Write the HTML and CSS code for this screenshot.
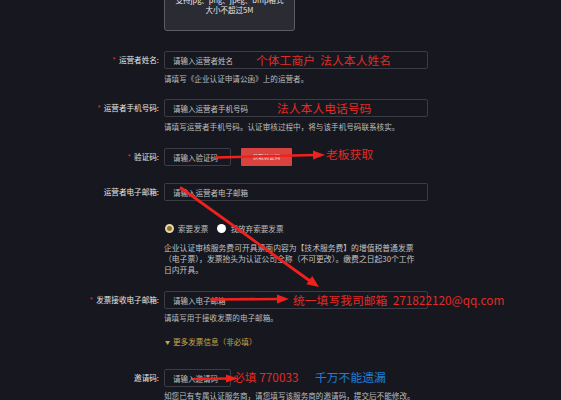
FILE: index.html
```html
<!DOCTYPE html>
<html lang="zh-CN">
<head>
<meta charset="utf-8">
<title>企业认证</title>
<link rel="stylesheet" href="styles.css">
</head>
<body>
<div class="page">
  <div class="form">
    <div class="row row-upload">
      <div class="label"></div>
      <div class="field">
        <div class="upload">
          <div>支持jpg、png、jpeg、bmp格式</div>
          <div>大小不超过5M</div>
        </div>
      </div>
    </div>

    <div class="row row-name">
      <div class="label"><span class="req">*</span>运营者姓名:</div>
      <div class="field">
        <div class="line">
          <input class="input" placeholder="请输入运营者姓名">
          <span class="note note-name">个体工商户&nbsp;&nbsp;法人本人姓名</span>
        </div>
        <div class="help">请填写《企业认证申请公函》上的运营者。</div>
      </div>
    </div>

    <div class="row row-phone">
      <div class="label"><span class="req">*</span>运营者手机号码:</div>
      <div class="field">
        <div class="line">
          <input class="input" placeholder="请输入运营者手机号码">
          <span class="note note-phone">法人本人电话号码</span>
        </div>
        <div class="help">请填写运营者手机号码。认证审核过程中，将与该手机号码联系核实。</div>
      </div>
    </div>

    <div class="row row-code">
      <div class="label"><span class="req">*</span>验证码:</div>
      <div class="field">
        <div class="line">
          <input class="input input-short" placeholder="请输入验证码">
          <button class="btn-code">获取验证码</button>
          <span class="note note-boss">老板获取</span>
        </div>
      </div>
    </div>

    <div class="row row-email">
      <div class="label">运营者电子邮箱:</div>
      <div class="field">
        <div class="line">
          <input class="input" placeholder="请输入运营者电子邮箱">
        </div>
      </div>
    </div>

    <div class="row row-radio">
      <div class="label"></div>
      <div class="field radios">
        <span class="radio radio-on"></span><span class="radio-text">索要发票</span>
        <span class="radio radio-off"></span><span class="radio-text">我放弃索要发票</span>
      </div>
    </div>

    <div class="row row-para">
      <div class="label"></div>
      <div class="field para">企业认证审核服务费可开具票面内容为【技术服务费】的增值税普通发票<br>（电子票），发票抬头为认证公司全称（不可更改）。缴费之日起30个工作<br>日内开具。</div>
    </div>

    <div class="row row-invoice">
      <div class="label"><span class="req">*</span>发票接收电子邮箱:</div>
      <div class="field">
        <div class="line">
          <input class="input" placeholder="请输入电子邮箱">
          <span class="note note-invoice">统一填写我司邮箱&nbsp;&nbsp;271822120@qq.com</span>
        </div>
        <div class="help">请填写用于接收发票的电子邮箱。</div>
      </div>
    </div>

    <div class="row row-more">
      <div class="label"></div>
      <div class="field more"><span class="tri">▼</span>更多发票信息（非必填）</div>
    </div>

    <div class="row row-invite">
      <div class="label">邀请码:</div>
      <div class="field">
        <div class="line">
          <input class="input input-short" placeholder="请输入邀请码">
          <span class="note note-must">必填 770033</span>
          <span class="note note-blue">千万不能遗漏</span>
        </div>
        <div class="help">如您已有专属认证服务商，请您填写该服务商的邀请码，提交后不能修改。</div>
      </div>
    </div>
  </div>

  <svg class="arrows" width="561" height="400" viewBox="0 0 561 400">
    <g fill="#f0201c" stroke="#f0201c" stroke-linecap="round">
      <line x1="216" y1="157.5" x2="314" y2="155" stroke-width="2.4"/>
      <polygon points="313,150.5 325,155 313,159.5" stroke="none"/>
      <line x1="181" y1="188" x2="310" y2="281" stroke-width="2.8"/>
      <polygon points="319,287 306.4,284.2 312.2,276" stroke="none"/>
      <line x1="211" y1="299.5" x2="279" y2="299" stroke-width="2.6"/>
      <polygon points="277,294.5 289,299 277,303.5" stroke="none"/>
      <line x1="194" y1="379" x2="228" y2="378.5" stroke-width="2.6"/>
      <polygon points="226,374.5 238,378.5 226,382.5" stroke="none"/>
    </g>
  </svg>
</div>
</body>
</html>
```

FILE: styles.css
```css
body {
  margin: 0;
  background: #17181f;
  font-family: "Noto Sans CJK SC", "Noto Sans", sans-serif;
}

.page {
  position: relative;
  width: 561px;
  height: 400px;
  overflow: hidden;
  background: #17181f;
}

.row {
  display: grid;
  grid-template-columns: 159px 264px;
  column-gap: 5px;
}

.label {
  text-align: right;
  font-size: 7.6px;
  line-height: 18px;
  color: #e6e6e6;
  white-space: nowrap;
}

.req {
  color: #e0352b;
  margin-right: 3px;
}

.field {
  min-width: 0;
}

.line {
  position: relative;
  display: flex;
  align-items: center;
}

.input {
  box-sizing: border-box;
  display: block;
  width: 100%;
  height: 18px;
  margin: 0;
  padding: 0 8px;
  border: 1px solid #3a3c46;
  border-radius: 2px;
  background: #17181f;
  color: #c4c4c4;
  font-family: inherit;
  font-size: 7.5px;
  outline: none;
}

.input::placeholder {
  color: #c2c2c2;
}

.input-short {
  width: 67px;
  flex: none;
}

.btn-code {
  box-sizing: border-box;
  width: 51px;
  height: 18px;
  margin: 0 0 0 10px;
  padding: 0;
  border: none;
  border-radius: 1px;
  background: #d8433f;
  color: #f4d8d6;
  font-family: inherit;
  font-size: 5.5px;
  line-height: 18px;
}

.note {
  position: absolute;
  top: 0;
  line-height: 18px;
  font-size: 11.8px;
  color: #e32a25;
  white-space: nowrap;
}

.note-name { left: 92px; }
.note-phone { left: 113px; }
.note-boss { left: 162px; top: -3px; }
.note-invoice { left: 129px; }
.note-must { left: 69px; top: -1px; }
.note-blue { left: 151px; top: -1px; color: #1f7fd6; }

.help {
  margin-top: 4px;
  font-size: 7.6px;
  line-height: 12px;
  color: #bdbdbd;
  white-space: nowrap;
}

.upload {
  box-sizing: border-box;
  width: 131px;
  margin-top: -12px;
  padding: 6px 0 15px;
  border: 1px solid #5b5d66;
  border-radius: 3px;
  background: #2a2b33;
  color: #e6e6e6;
  font-size: 7.5px;
  line-height: 10px;
  text-align: center;
}

.row-name { margin-top: 20px; }
.row-phone { margin-top: 14px; }
.row-code { margin-top: 15px; }
.row-email { margin-top: 17px; }
.row-radio { margin-top: 21px; }
.row-para { margin-top: 7.5px; }
.row-invoice { margin-top: 16.5px; }
.row-more { margin-top: 12px; }
.row-invite { margin-top: 21px; }

.row-invoice .help,
.row-invite .help {
  margin-top: 3px;
}

.radios {
  display: flex;
  align-items: center;
  height: 12px;
  font-size: 7.6px;
  color: #bdbdbd;
}

.radio {
  box-sizing: border-box;
  width: 9px;
  height: 9px;
  border-radius: 50%;
  flex: none;
}

.radio-on {
  margin-left: 1px;
  border: 2px solid #e9d8a4;
  background: #8d7230;
}

.radio-off {
  margin-left: 9px;
  background: #ffffff;
}

.radio-text {
  margin-left: 4px;
}

.para {
  font-size: 7.8px;
  line-height: 11px;
  color: #c2c2c2;
  white-space: nowrap;
}

.more {
  font-size: 7.6px;
  line-height: 12px;
  color: #c9a64c;
}

.tri {
  display: inline-block;
  font-size: 5px;
  margin: 0 3px 0 1px;
  vertical-align: 1px;
}

.arrows {
  position: absolute;
  top: 0;
  left: 0;
  pointer-events: none;
}
```
